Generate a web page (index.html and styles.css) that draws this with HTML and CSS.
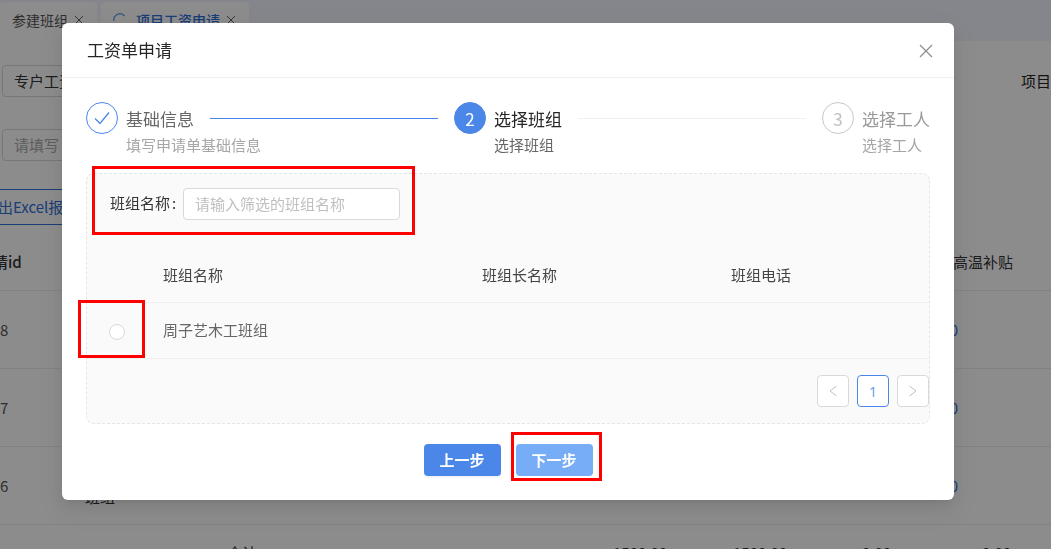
FILE: index.html
```html
<!DOCTYPE html>
<html lang="zh-CN">
<head>
<meta charset="utf-8">
<title>工资单申请</title>
<link rel="stylesheet" href="styles.css">
</head>
<body>
<div class="page">
  <nav class="tabs">
    <div class="tab"><span>参建班组</span><svg class="tab-x" viewBox="0 0 8 8" width="8" height="8"><path d="M0 0L8 8M8 0L0 8" fill="none" stroke="#666" stroke-width="1"/></svg></div>
    <div class="tab tab-active">
      <svg class="spin" viewBox="0 0 14 14" width="14" height="14"><path d="M1 8A6 6 0 0 1 11.5 3M13 7" fill="none" stroke="#5a8fe6" stroke-width="1.2"/></svg>
      <span>项目工资申请</span><svg class="tab-x" viewBox="0 0 8 8" width="8" height="8"><path d="M0 0L8 8M8 0L0 8" fill="none" stroke="#666" stroke-width="1"/></svg>
    </div>
  </nav>
  <section class="filters">
    <div class="filter-row first">
      <div class="field">专户工资</div>
      <div class="far-label">项目名称</div>
    </div>
    <div class="filter-row">
      <div class="field muted">请填写</div>
    </div>
    <div class="export">导出Excel报表</div>
  </section>
  <section class="bg-table">
    <div class="bg-row bg-head">
      <span class="c1">申请id</span>
      <span class="c7">高温补贴</span>
    </div>
    <div class="bg-row">
      <span class="c1 num">1058</span>
      <span class="c2">周子艺木工<br>班组</span>
      <a class="c6">0.00</a>
    </div>
    <div class="bg-row">
      <span class="c1 num">1057</span>
      <span class="c2">周子艺木工<br>班组</span>
      <a class="c6">0.00</a>
    </div>
    <div class="bg-row">
      <span class="c1 num">1056</span>
      <span class="c2">周子艺木工<br>班组</span>
      <a class="c6">0.00</a>
    </div>
    <div class="bg-row bg-total">
      <span class="c3">合计</span>
      <span class="c4">1500.00</span>
      <span class="c5">1500.00</span>
      <span class="c6s">0.00</span>
      <span class="c9">0.00</span>
    </div>
  </section>
</div>

<div class="overlay">
  <div class="modal">
    <header class="modal-head">
      <h2 class="modal-title">工资单申请</h2>
      <svg class="close" viewBox="0 0 14 14" width="14" height="14"><path d="M1 1L13 13M13 1L1 13" fill="none" stroke="#8c8c8c" stroke-width="1.2"/></svg>
    </header>
    <div class="modal-body">
      <div class="steps">
        <div class="step done">
          <div class="step-icon"><svg viewBox="0 0 16 14" width="16" height="14"><path d="M1 7.5L6 12.5L15 1.5" fill="none" stroke="#4b87e9" stroke-width="1.3"/></svg></div>
          <div class="step-main">
            <div class="step-line-row"><span class="step-title">基础信息</span><i class="line line-done"></i></div>
            <div class="step-desc">填写申请单基础信息</div>
          </div>
        </div>
        <div class="step current">
          <div class="step-icon">2</div>
          <div class="step-main">
            <div class="step-line-row"><span class="step-title">选择班组</span><i class="line"></i></div>
            <div class="step-desc">选择班组</div>
          </div>
        </div>
        <div class="step todo">
          <div class="step-icon">3</div>
          <div class="step-main">
            <div class="step-line-row"><span class="step-title">选择工人</span></div>
            <div class="step-desc">选择工人</div>
          </div>
        </div>
      </div>

      <div class="panel">
        <div class="search">
          <label class="search-label">班组名称<span class="colon">:</span></label>
          <input class="search-input" type="text" placeholder="请输入筛选的班组名称">
        </div>
        <div class="grid-row grid-head">
          <span></span><span>班组名称</span><span>班组长名称</span><span>班组电话</span>
        </div>
        <div class="grid-row grid-data">
          <span class="radio-cell"><i class="radio"></i></span><span>周子艺木工班组</span><span></span><span></span>
        </div>
        <div class="pager">
          <span class="pg"><svg viewBox="0 0 8 12" width="8" height="12"><path d="M7.5 1L1 6L7.5 11" fill="none" stroke="#bfbfbf" stroke-width="1"/></svg></span>
          <span class="pg pg-on">1</span>
          <span class="pg"><svg viewBox="0 0 8 12" width="8" height="12"><path d="M.5 1L7 6L.5 11" fill="none" stroke="#bfbfbf" stroke-width="1"/></svg></span>
        </div>
      </div>

      <div class="actions">
        <button class="btn btn-prev" type="button">上一步</button>
        <button class="btn btn-next" type="button">下一步</button>
      </div>
    </div>
  </div>
  <div class="mark mark-search"></div>
  <div class="mark mark-radio"></div>
  <div class="mark mark-next"></div>
</div>
</body>
</html>
```
FILE: styles.css
```css
* { box-sizing: border-box; }
html, body { margin: 0; height: 100%; overflow: hidden; }
body {
  font-family: "Noto Sans CJK SC", "Noto Sans", sans-serif;
  font-size: 15px;
  color: #333;
  background: #fff;
}
.page { width: 1051px; height: 549px; overflow: hidden; background: #fff; }

.tabs { display: flex; gap: 4px; height: 41px; padding-top: 2px; background: #f3f5fd; }
.tab {
  display: flex; align-items: center; width: 97px; padding: 0 0 3px 12px;
  background: #fff; border-radius: 4px 4px 0 0; color: #555; font-size: 14px;
}
.tab-active { width: 148px; color: #2f6fd8; font-weight: 500; }
.spin { margin-right: 9px; }
.tab-x { margin-left: 7px; }

.filter-row { display: flex; justify-content: space-between; height: 32px; margin-top: 32px; padding-left: 2px; }
.filter-row.first { margin-top: 24px; }
.field {
  width: 200px; height: 32px; padding: 0 11px; line-height: 30px;
  border: 1px solid #d9d9d9; border-radius: 4px;
}
.field.muted { color: #aaa; }
.far-label { width: 30px; white-space: nowrap; line-height: 32px; color: #222; }
.export {
  width: 200px; height: 36px; margin: 28px 0 0 -33px; padding-left: 15px; line-height: 34px;
  color: #2f6fd8; border: 1px solid #2f6fd8; border-radius: 2px;
}

.bg-table { margin: 9px 0 0 -22px; width: 1073px; }
.bg-row {
  display: grid;
  grid-template-columns: 107px 142px 386px 120px 129px 91px 5px 24px 69px;
  align-items: center;
  height: 78px;
  border-bottom: 1px solid #ececec;
  color: #555;
}
.bg-head { height: 57px; padding-bottom: 2px; color: #333; font-weight: 500; }
.bg-total { height: 54px; border: 0; color: #333; }
.num { margin-left: -3px; }
.c1 { grid-column: 1; }
.c2 { grid-column: 2; line-height: 22px; color: #333; }
.c3 { grid-column: 3; }
.c4 { grid-column: 4; }
.c5 { grid-column: 5; }
.c6 { grid-column: 6 / 8; justify-self: end; color: #2f6fd8; }
.c6s { grid-column: 6; }
.c7 { grid-column: 7 / 10; font-weight: 400; }
.c9 { grid-column: 9; }

.overlay { position: fixed; inset: 0; background: rgba(0, 0, 0, .45); }
.modal {
  width: 892px; height: 477px; margin: 23px 0 0 62px;
  background: #fff; border-radius: 6px;
  box-shadow: 0 6px 16px rgba(0,0,0,.08), 0 3px 6px -4px rgba(0,0,0,.12), 0 9px 28px 8px rgba(0,0,0,.05);
}
.modal-head {
  display: flex; align-items: center; justify-content: space-between;
  height: 55px; padding: 0 21px 1px 25px; border-bottom: 1px solid #f0f0f0;
}
.modal-title { margin: 0; font-size: 17px; font-weight: 400; color: #262626; }
.close { margin-top: 3px; }
.modal-body { padding: 24px 24px 0; }

.steps { display: flex; }
.step { display: flex; flex: 1 1 0; min-width: 0; }
.step.todo { flex: 0 0 108px; }
.step-icon {
  flex: none; display: flex; align-items: center; justify-content: center;
  width: 32px; height: 32px; margin-right: 8px; border-radius: 50%;
  border: 1px solid #4b87e9; font-size: 17px;
}
.step.current .step-icon { background: #4b87e9; color: #fff; }
.step.todo .step-icon { border-color: #c9c9c9; color: #bfbfbf; }
.step-main { flex: 1; min-width: 0; }
.step-line-row { display: flex; align-items: center; height: 32px; }
.step-title { flex: none; font-size: 17px; color: #666; }
.step.current .step-title { color: #262626; }
.step.todo .step-title { color: #999; }
.line { flex: 1; height: 1px; margin: 0 16px; background: #f0f0f0; }
.line-done { background: #4b87e9; }
.step-desc { line-height: 22px; font-size: 15px; color: #a6a6a6; white-space: nowrap; }
.step.current .step-desc { color: #666; }

.panel {
  height: 251px; margin-top: 17px;
  background: #fafafa; border: 1px dashed #e6e6e6; border-radius: 8px;
}
.search { display: flex; align-items: center; height: 32px; margin-top: 14px; padding-left: 23px; }
.search-label { width: 73px; padding-bottom: 3px; color: #333; white-space: nowrap; }
.colon { margin-left: 2px; }
.search-input {
  width: 217px; height: 32px; padding: 0 11px 2px;
  font: inherit; color: #333; background: #fff;
  border: 1px solid #d9d9d9; border-radius: 4px; outline: none;
}
.search-input::placeholder { color: #bfbfbf; }

.grid-row { display: grid; grid-template-columns: 76px 319px 249px 1fr; align-items: center; border-bottom: 1px solid #f0f0f0; }
.grid-head { height: 54px; margin-top: 29px; padding-bottom: 2px; color: #444; }
.grid-data { height: 56px; padding-bottom: 2px; color: #666; }
.radio-cell { display: flex; padding: 4px 0 0 22px; }
.radio { width: 16px; height: 16px; background: #fff; border: 1px solid #d9d9d9; border-radius: 50%; }

.pager { display: flex; justify-content: flex-end; gap: 8px; margin-top: 16px; }
.pg {
  display: flex; align-items: center; justify-content: center;
  width: 32px; height: 32px; background: #fff;
  font-family: "Noto Sans", sans-serif; font-size: 14px;
  border: 1px solid #d9d9d9; border-radius: 4px; color: #6a9ff0;
}
.pg-on { border-color: #4b87e9; }

.actions { display: flex; justify-content: center; gap: 15px; margin-top: 20px; }
.btn {
  width: 77px; height: 32px; padding: 0 0 2px; border: 0; border-radius: 4px;
  font: inherit; font-weight: 700; color: #fff;
}
.btn-prev { background: #4b87e9; box-shadow: 0 2px 0 rgba(40, 60, 160, .06); }
.btn-next { background: #77acf7; }

.mark { position: absolute; border: 3px solid #ff0000; }
.mark-search { left: 92px; top: 166px; width: 323px; height: 69px; }
.mark-radio { left: 78px; top: 300px; width: 67px; height: 58px; }
.mark-next { left: 511px; top: 432px; width: 91px; height: 49px; }
```
